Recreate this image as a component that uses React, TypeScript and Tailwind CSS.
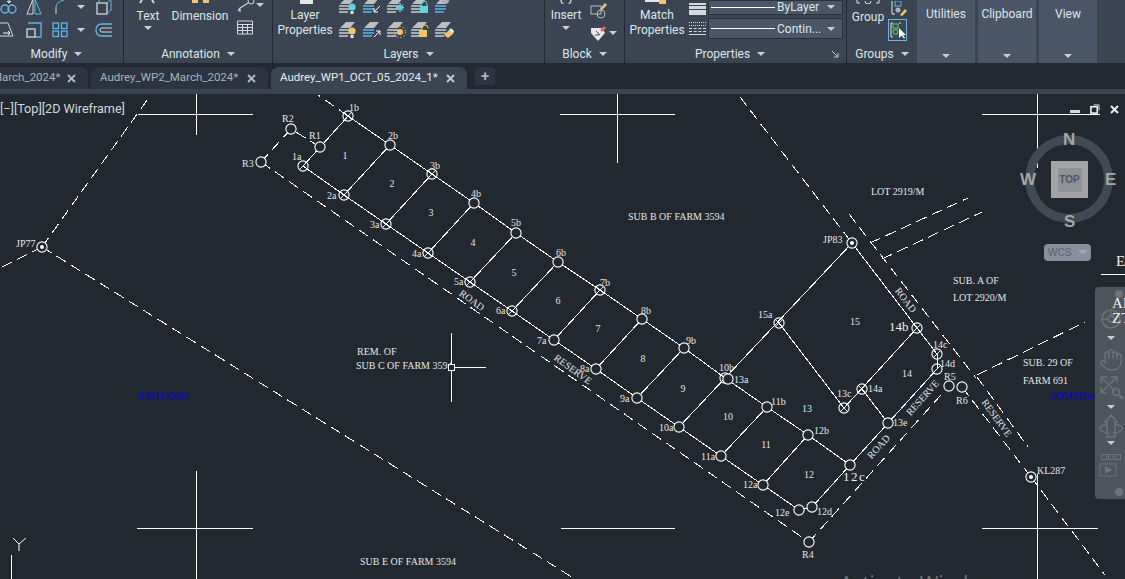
import { Hand } from "lucide-react";
import type { ReactNode } from "react";

const BLUE = "#5cb8ec";
const GREY = "#d4d9de";
const CYAN = "#63d3e0";
const AMBER = "#f5c469";
const BG = "#212830";

const Caret = ({ className = "" }: { className?: string }) => (
  <span className={`inline-block h-0 w-0 border-x-[4px] border-t-[4px] border-x-transparent border-t-[#c8ced4] ${className}`} />
);

const Ico = ({ w = 18, h = 18, children }: { w?: number; h?: number; children: ReactNode }) => (
  <svg width={w} height={h} viewBox={`0 0 ${w} ${h}`} fill="none" className="block shrink-0">
    {children}
  </svg>
);

const Panel = ({ title, className, titleClass = "", children, corner }: { title: string; className: string; titleClass?: string; children: ReactNode; corner?: boolean }) => (
  <div className={`relative flex h-[63px] shrink-0 flex-col border-r border-[#222933] ${className}`}>
    <div className="h-[46px] overflow-hidden">{children}</div>
    <div className={`flex h-[16px] items-center justify-center gap-[7px] text-[12px] leading-none text-[#dce6ea] ${titleClass}`}>
      {title}
      <Caret />
    </div>
    {corner && (
      <svg width="7" height="7" viewBox="0 0 7 7" className="absolute bottom-[5px] right-[7px]">
        <path d="M0 0L6 6M6 2V6H2" stroke="#c8ced4" fill="none" />
      </svg>
    )}
  </div>
);

const Stacked = ({ title }: { title: string }) => (
  <div className="flex h-[63px] w-[58px] shrink-0 flex-col items-center justify-between bg-[#4b5669] pb-[5px] pt-[7px] text-[12px] leading-[14px] text-[#dce6ea]">
    {title}
    <Caret />
  </div>
);

// layer sheet stack used by every icon of the Layers panel
const LayerIco = ({ tint, children }: { tint?: string; children?: ReactNode }) => (
  <Ico w={20} h={18}>
    <path d="M2 7L8 1H17L12 7Z" fill="#bcc0c5" />
    <path d="M1 9H12M1 12H12M1 15H10" stroke={tint ?? "#c9cdd2"} strokeWidth="1.5" />
    {children}
  </Ico>
);

const Bulb = ({ c }: { c: string }) => (
  <>
    <circle cx="14" cy="10" r="3.6" fill={c} />
    <rect x="12.5" y="14" width="3" height="3" fill="#e8e8e8" />
  </>
);

const LAYER_TOP = [
  <LayerIco key="a"><Bulb c={CYAN} /></LayerIco>,
  <LayerIco key="b" tint={BLUE}><path d="M18 9L12 15M12 11V15H16" stroke="#fff" fill="none" /></LayerIco>,
  <LayerIco key="c"><path d="M14 6V15M10 10.5H18M11 8L17 13M17 8L11 13" stroke={CYAN} strokeWidth="1.5" /></LayerIco>,
  <LayerIco key="d"><path d="M11 9V7a3 3 0 016 0v2" stroke={CYAN} fill="none" /><rect x="10" y="9" width="8" height="7" fill={CYAN} /></LayerIco>,
  <LayerIco key="e" tint={BLUE}><circle cx="11" cy="3" r="4" fill="#aeb3b8" /></LayerIco>,
];

const LAYER_BOTTOM = [
  <LayerIco key="a"><Bulb c={AMBER} /></LayerIco>,
  <LayerIco key="b" tint={BLUE}><path d="M12 16L18 10M14 10H18V14" stroke="#fff" fill="none" /></LayerIco>,
  <LayerIco key="c"><circle cx="14" cy="11" r="3" fill={AMBER} /><circle cx="14" cy="11" r="5.5" stroke={AMBER} strokeDasharray="1.5 2" /></LayerIco>,
  <LayerIco key="d"><path d="M12 9V7a3 3 0 016 0" stroke={AMBER} fill="none" /><rect x="9" y="9" width="8" height="7" fill={AMBER} /></LayerIco>,
  <LayerIco key="e"><path d="M10 14L15 9L19 13L14 17Z" fill={AMBER} /><path d="M15 9L17 7L20 10L19 13Z" fill="#eee" /></LayerIco>,
];

const Ribbon = () => (
  <div className="flex h-[63px] shrink-0 overflow-hidden bg-[#3b4453]">
    <Panel title="Modify" titleClass="pr-[10px]" className="w-[124px]">
      <div className="-mt-[2px] grid grid-cols-[20px_28px_24px_18px_28px] grid-rows-[18px_18px] items-center justify-items-center gap-y-[5px]">
        <Ico w={20}><circle cx="5" cy="11" r="4" stroke={BLUE} strokeWidth="1.4" /><circle cx="12" cy="11" r="4" stroke={BLUE} strokeWidth="1.4" /><path d="M9 0V5M7 3L9 5L11 3" stroke="#fff" /></Ico>
        <Ico><path d="M8 1L2 16H8Z" stroke={GREY} /><path d="M10 1L16 16H10Z" stroke={BLUE} /></Ico>
        <Ico><path d="M5 16V9" stroke={GREY} /><path d="M5 9Q5 4 13 2" stroke={BLUE} /></Ico>
        <Caret />
        <Ico><rect x="2" y="5" width="10" height="11" stroke={GREY} strokeWidth="1.3" /><path d="M2 5L6 1H16V12L12 16M12 5L16 1" stroke={BLUE} /></Ico>
        <Ico w={20}><path d="M0 2H8L13 15H0" stroke={GREY} /><path d="M3 12H10M8 10L10 12L8 14" stroke="#fff" /></Ico>
        <Ico><path d="M3 2H16V16H10" stroke={BLUE} strokeWidth="1.3" /><rect x="2" y="8" width="8" height="8" stroke={GREY} strokeWidth="1.3" /></Ico>
        <Ico><g stroke={BLUE} strokeWidth="1.3"><rect x="2" y="2" width="5.5" height="5.5" /><rect x="10.5" y="2" width="5.5" height="5.5" /><rect x="2" y="10" width="5.5" height="5.5" /><rect x="10.5" y="10" width="5.5" height="5.5" /></g></Ico>
        <Caret />
        <Ico><path d="M17 3H7Q1 3 1 9T7 15H17" stroke={BLUE} strokeWidth="1.3" /><path d="M17 7H7Q5 7 5 9T7 11H17" stroke={GREY} /></Ico>
      </div>
    </Panel>

    <Panel title="Annotation" className="w-[149px]">
      <div className="flex">
        <div className="flex w-[48px] flex-col items-center text-[12px] leading-[14px] text-[#dce6ea]">
          <svg width="24" height="4" viewBox="0 0 24 4" className="mb-[5px]"><path d="M4 3L6 0M18 3L16 0" stroke="#d4d9de" strokeWidth="2" /></svg>
          Text
          <Caret className="mt-[3px]" />
        </div>
        <div className="flex w-[56px] flex-col items-center whitespace-nowrap text-[12px] leading-[14px] text-[#dce6ea]">
          <svg width="26" height="4" viewBox="0 0 26 4" className="mb-[5px]"><rect x="5" y="0" width="6" height="3" fill={AMBER} /><rect x="16" y="0" width="6" height="3" fill={AMBER} /></svg>
          Dimension
        </div>
        <div className="-mt-[4px] grid grid-cols-[20px_12px] items-center gap-y-[5px] pl-[8px]">
          <Ico w={20}><circle cx="15" cy="5" r="3" stroke={GREY} /><path d="M12 7L4 12V16M4 12L2 15" stroke={GREY} strokeWidth="1.2" /></Ico>
          <Caret />
          <Ico><path d="M1.5 2H16.5V15H1.5ZM1.5 5.5H16.5M1.5 8.5H16.5M1.5 11.5H16.5M6.5 5.5V15M11.5 5.5V15" stroke={GREY} /></Ico>
        </div>
      </div>
    </Panel>

    <Panel title="Layers" className="w-[272px]">
      <div className="flex">
        <div className="flex w-[64px] flex-col items-center text-[12px] leading-[15px] text-[#dce6ea]">
          <svg width="14" height="4" viewBox="0 0 14 4" className="ml-[4px] mb-[4px]"><rect width="13" height="4" fill="#e6e6e6" /></svg>
          <span>Layer</span>
          <span>Properties</span>
        </div>
        <div className="-mt-[3px] ml-[1px] grid grid-cols-[repeat(5,24px)] grid-rows-[18px_18px] gap-y-[6px]">
          {LAYER_TOP}
          {LAYER_BOTTOM}
        </div>
      </div>
    </Panel>

    <Panel title="Block" className="w-[80px]">
      <div className="flex pl-[3px]">
        <div className="flex w-[36px] flex-col items-center text-[12px] leading-[14px] text-[#dce6ea]">
          <svg width="14" height="4" viewBox="0 0 14 4" className="mb-[4px]"><path d="M2 0A5 5 0 0012 0" stroke="#c8ced4" fill="none" strokeWidth="1.5" /></svg>
          Insert
          <Caret className="mt-[4px]" />
        </div>
        <div className="ml-[5px] grid grid-cols-[20px_12px] items-center gap-y-[5px] pt-[1px]">
          <Ico w={20}><rect x="2" y="5" width="10" height="8" stroke="#b9bec4" /><circle cx="12" cy="13" r="4" stroke="#b9bec4" /><path d="M11 8L16 2L18 4L13 9Z" fill={AMBER} /></Ico>
          <span />
          <Ico w={20}><path d="M2 4H13L16 9L9 17L2 9Z" fill="#e6e6e6" /><path d="M7 7L11 11M6 11H10" stroke="#3b4453" /><path d="M11 6L15 2L17 4L13 8Z" fill="#e86a5a" /></Ico>
          <Caret />
        </div>
      </div>
    </Panel>

    <Panel title="Properties" titleClass="pr-[11px]" corner className="w-[222px]">
      <div className="flex">
        <div className="flex w-[64px] flex-col items-center text-[12px] leading-[15px] text-[#dce6ea]">
          <svg width="24" height="4" viewBox="0 0 24 4" className="mb-[4px]"><rect x="0" y="0" width="16" height="2" fill="#e6e6e6" /><rect x="14" y="0" width="7" height="4" fill={AMBER} /></svg>
          <span>Match</span>
          <span>Properties</span>
        </div>
        <div className="flex flex-col gap-[3px]">
          <div className="flex items-start">
            <div className="mr-[2px] flex h-[15px] w-[17px] flex-col justify-end gap-[1px]">
              <div className="h-[2px] bg-[#d4d9de]" />
              <div className="h-[3px] bg-[#d4d9de]" />
              <div className="h-[5px] bg-[#d4d9de]" />
            </div>
            <Combo label="ByLayer" className="h-[15px] items-end pb-[1px]" />
          </div>
          <div className="flex items-center">
            <div className="mr-[2px] flex h-[21px] w-[17px] flex-col justify-center gap-[2px]">
              <div className="h-0 border-t border-dotted border-[#d4d9de]" />
              <div className="h-0 border-t border-dotted border-[#d4d9de]" />
              <div className="h-0 border-t border-dashed border-[#d4d9de]" />
              <div className="h-0 border-t border-dashed border-[#d4d9de]" />
              <div className="h-0 border-t border-[#d4d9de]" />
            </div>
            <Combo label="Contin..." className="h-[21px] items-center" />
          </div>
        </div>
      </div>
    </Panel>

    <Panel title="Groups" className="w-[70px] border-r-0">
      <div className="flex pl-[3px]">
        <div className="flex w-[36px] flex-col items-center text-[12px] leading-[14px] text-[#dce6ea]">
          <svg width="24" height="4" viewBox="0 0 24 4" className="mb-[6px]"><path d="M1 0V3H4M20 3H23V0M9 1A3 3 0 0015 1" stroke="#e6e6e6" fill="none" /></svg>
          Group
        </div>
        <div className="ml-[2px] flex flex-col items-center gap-[3px] pt-[1px]">
          <Ico w={18} h={15}><path d="M3 0V13H6" stroke="#e6e6e6" /><rect x="6" y="0" width="6" height="5" stroke={BLUE} /><circle cx="9" cy="9" r="2.5" fill="#aeb3b8" /><path d="M11 14L16 8L18 10L13 15Z" fill={AMBER} /></Ico>
          <div className="h-[22px] w-[19px] border border-[#6cb4e4]">
            <Ico w={17} h={20}><path d="M4 3H2V17H4M12 3H10" stroke="#e6e6e6" /><rect x="4" y="4" width="5" height="4" stroke="#54b86a" strokeWidth="1.3" /><circle cx="6.5" cy="12" r="2.3" stroke="#54b86a" strokeWidth="1.3" /><path d="M10 8V18L12.5 15.5L15 18.5L16 17.5L14 15H17Z" fill="#fff" /></Ico>
          </div>
        </div>
      </div>
    </Panel>

    <div className="flex shrink-0 gap-[3px]">
      <Stacked title="Utilities" />
      <Stacked title="Clipboard" />
      <Stacked title="View" />
    </div>
  </div>
);

const Combo = ({ label, className }: { label: string; className: string }) => (
  <div className={`flex w-[135px] justify-between border border-[#2a313d] bg-[#4b5669] pl-[2px] pr-[7px] text-[12px] leading-none text-[#dce6ea] ${className}`}>
    <span className="flex items-center gap-[2px]">
      <span className="h-0 w-[64px] border-t border-white" />
      {label}
    </span>
    <Caret className="self-center" />
  </div>
);

const Tab = ({ label, active, className }: { label: string; active?: boolean; className: string }) => (
  <div
    className={`flex h-[22px] shrink-0 items-center justify-between rounded-t-[8px] pr-[12px] text-[11.5px] ${active ? "bg-[#3b4453] text-[#e6edf0]" : "bg-[#2c3441] text-[#aab2bb]"} ${className}`}
  >
    <span>{label}</span>
    <svg width="9" height="9" viewBox="0 0 9 9"><path d="M1 1L8 8M8 1L1 8" stroke={active ? "#c4c9ce" : "#b4bac0"} strokeWidth="1.8" /></svg>
  </div>
);

const TabBar = () => (
  <div className="flex h-[31px] shrink-0 flex-col justify-end bg-[#222933]">
    <div className="flex gap-[3px] overflow-hidden">
      <Tab label="March_2024*" className="-ml-[8px] w-[96px] pl-0" />
      <Tab label="Audrey_WP2_March_2024*" className="w-[177px] pl-[9px]" />
      <Tab label="Audrey_WP1_OCT_05_2024_1*" active className="w-[196px] pl-[9px]" />
      <div className="ml-[5px] flex h-[18px] w-[20px] items-center justify-center rounded-t-[4px] bg-[#2c3441] text-[15px] font-bold leading-none text-[#aab2bb]">+</div>
    </div>
    <div className="h-[5px] bg-[#3b4453]" />
  </div>
);

type P = [number, number];
const B: P[] = [[348,116],[390,145],[432,174],[474,203],[516,233],[558,262],[600,290],[642,319],[684,348],[725,378],[767,407],[808,435],[850,465]];
const A: P[] = [[303,166],[344,195],[386,224],[428,253],[470,282],[512,311],[554,340],[596,369],[637,398],[679,427],[721,456],[763,485],[799,510]];

const pts = (l: P[]) => l.map((p) => p.join(",")).join(" ");

const SOLID: [number, number, number, number][] = [
  [812, 507, 937, 369], [799, 510, 812, 507], [679, 427, 852, 243], [852, 243, 937, 354], [937, 354, 937, 369],
  [917, 328, 844, 408], [779, 323, 844, 408], [862, 389, 888, 423],
  [350, 114, 303, 166],
  ...B.slice(1, 9).map((b, i) => [b[0], b[1], A[i + 1][0], A[i + 1][1]] as [number, number, number, number]),
  [767, 407, 721, 456], [808, 435, 763, 485],
];

const DASHED: [number, number, number, number][] = [
  [348, 116, 318, 95], [320, 147, 291, 129], [291, 129, 261, 162], [261, 162, 809, 542], [809, 542, 949, 386],
  [740, 97, 852, 243], [849, 214, 976, 378], [977, 377, 1028, 447], [962, 387, 1031, 477], [1031, 477, 1105, 575],
  [870, 243, 968, 198], [882, 259, 982, 212], [977, 375, 1085, 322],
  [42, 247, 150, 96], [42, 247, 0, 268], [42, 247, 575, 579],
];

const GRID: [number, number, number, number][] = [
  [138, 114, 253, 114], [196.5, 94, 196.5, 135], [560, 114, 675, 114], [617.5, 94, 617.5, 163],
  [982, 114, 1100, 114], [1037.5, 94, 1037.5, 168],
  [137, 528, 253, 528], [196.5, 471, 196.5, 579], [561, 528, 675, 528],
  [982, 528, 1098, 528], [1037.5, 474, 1037.5, 579],
];

type Mark = [number, number, "o" | "x" | "/" | "d"];
const MARKS: Mark[] = [
  [348,116,"x"],[390,145,"o"],[432,174,"x"],[474,203,"o"],[516,233,"o"],[558,262,"o"],[600,290,"x"],[642,319,"o"],[684,348,"o"],[725,378,"x"],[728,379,"o"],[767,407,"o"],[808,435,"o"],[850,465,"o"],
  [303,166,"/"],[344,195,"x"],[386,224,"x"],[428,253,"x"],[470,282,"x"],[512,311,"/"],[554,340,"o"],[596,369,"o"],[637,398,"o"],[679,427,"o"],[721,456,"o"],[763,485,"o"],[799,510,"o"],[812,507,"o"],
  [320,147,"o"],[291,129,"o"],[261,162,"o"],[809,542,"o"],[852,243,"d"],[779,323,"x"],[917,328,"x"],[937,354,"/"],[937,369,"/"],[844,408,"x"],[862,389,"x"],[888,423,"o"],[949,386,"o"],[962,387,"o"],[1031,477,"d"],[42,247,"d"],
];

const LABELS: [string, number, number][] = [
  ["1b",349,111],["R2",282,122],["R1",309,139],["1a",292,160],["R3",242,167],["2b",388,139],["3b",430,169],["4b",471,197],["5b",511,226],["6b",556,256],["7b",600,286],["8b",641,314],["9b",686,344],["10b",719,371],["13a",734,383],["11b",771,405],["12b",814,434],
  ["2a",327,199],["3a",370,228],["4a",412,257],["5a",454,285],["6a",496,314],["7a",537,344],["8a",580,372],["9a",620,402],["10a",659,431],["11a",701,460],["12a",743,488],["12e",775,516],["12d",817,515],["R4",802,558],["R5",944,380],["R6",956,404],
  ["14a",868,392],["13c",837,397],["13e",893,426],["14c",933,348],["14d",940,367],["15a",758,318],["JP83",823,243],["JP77",16,247],["KL287",1037,474],
];

const LOTS: [string, number, number][] = [
  ["1",345,159],["2",392,187],["3",431,216],["4",473,246],["5",514,276],["6",558,304],["7",598,332],["8",643,362],["9",683,392],["10",728,420],["11",766,448],["12",809,478],["13",807,412],["14",907,377],["15",855,325],
];

const NOTES: [string, number, number][] = [
  ["SUB B OF FARM 3594",628,220],["LOT 2919/M",871,195],["SUB. A OF",953,284],["LOT 2920/M",953,301],["SUB. 29 OF",1023,366],["FARM 691",1023,384],["REM. OF",357,355],["SUB C OF FARM 3594",356,369],["SUB E OF FARM 3594",360,565],
];

const ROTATED: [string, number, number, number][] = [
  ["ROAD",470,303,36],["RESERVE",571,372,36],["ROAD",903,302,53],["RESERVE",925,400,-48],["ROAD",881,449,-48],["RESERVE",994,420,54],
];

const Drawing = () => (
  <svg viewBox="0 94 1125 485" className="block h-full w-full" fontFamily="'Liberation Serif', serif">
    <g stroke="#fff" fill="none" shapeRendering="crispEdges">
      {GRID.map(([x1, y1, x2, y2]) => <line key={`${x1}-${y1}-${x2}`} x1={x1} y1={y1} x2={x2} y2={y2} strokeWidth="1" />)}
      {DASHED.map(([x1, y1, x2, y2]) => <line key={`${x1}-${y1}-${x2}`} x1={x1} y1={y1} x2={x2} y2={y2} strokeDasharray="11 6" />)}
      <polyline points={pts(B)} />
      <polyline points={pts(A)} />
      {SOLID.map(([x1, y1, x2, y2]) => <line key={`${x1}-${y1}-${x2}`} x1={x1} y1={y1} x2={x2} y2={y2} />)}
    </g>
    <g stroke="#fff" strokeWidth="1.1">
      {MARKS.map(([x, y, t]) => (
        <g key={`${x}-${y}`}>
          <circle cx={x} cy={y} r="5.1" fill={t === "o" || t === "d" ? BG : "none"} />
          {t === "x" && <path d={`M${x - 3.4} ${y - 3.4}L${x + 3.4} ${y + 3.4}M${x + 3.4} ${y - 3.4}L${x - 3.4} ${y + 3.4}`} strokeWidth="0.9" />}
          {t === "/" && <path d={`M${x + 3.4} ${y - 3.4}L${x - 3.4} ${y + 3.4}`} strokeWidth="0.9" />}
          {t === "d" && <circle cx={x} cy={y} r="2" fill="#fff" stroke="none" />}
        </g>
      ))}
    </g>
    <g fill="#e4e6e8" fontSize="10">
      {LABELS.map(([t, x, y]) => <text key={t} x={x} y={y}>{t}</text>)}
      {LOTS.map(([t, x, y]) => <text key={`lot${t}`} x={x} y={y} textAnchor="middle">{t}</text>)}
      {NOTES.map(([t, x, y]) => <text key={t} x={x} y={y}>{t}</text>)}
      {ROTATED.map(([t, x, y, r]) => (
        <text key={`${t}${x}`} x={x} y={y} textAnchor="middle" transform={`rotate(${r} ${x} ${y})`}>{t}</text>
      ))}
      <text x="889" y="331" fontSize="13" fill="#eee">14b</text>
      <text x="843" y="481" fontSize="13" fill="#eee" letterSpacing="1.5">12c</text>
      <text x="139" y="399" fill="#0000e8">8304325mN</text>
      <text x="1052" y="399" fill="#0000e8">8304325mN</text>
      <text x="840" y="590" fontSize="20" fill="#6c7178" fontFamily="'Noto Sans', sans-serif">Activate Windows</text>
    </g>
    {/* pick cursor */}
    <path d="M451.5 333V402M451 367.5H486" stroke="#fff" shapeRendering="crispEdges" />
    <rect x="448.5" y="364.5" width="6" height="6" fill={BG} stroke="#fff" shapeRendering="crispEdges" />
    {/* UCS stub */}
    <path d="M13 538L19 544L26 538M19 544V551M11.5 555V579" stroke="#fff" fill="none" />
  </svg>
);

const ViewCube = () => (
  <div className="absolute left-[1025px] top-[41px] h-[88px] w-[88px] text-center font-['Liberation_Sans',sans-serif] text-[17px] font-bold leading-none text-[#a2a6aa]">
    <div className="absolute inset-0 rounded-full border-[9px] border-[#414a54]" />
    <div className="absolute left-[26px] top-[26px] flex h-[37px] w-[37px] items-center justify-center bg-[#a4a4a4]">
      <div className="flex h-[24px] w-[24px] items-center justify-center bg-[#8e9398] text-[10px] text-[#4c5560]">TOP</div>
    </div>
    <span className="absolute left-[38px] top-[-4px]">N</span>
    <span className="absolute left-[39px] top-[78px]">S</span>
    <span className="absolute left-[-5px] top-[36px]">W</span>
    <span className="absolute left-[80px] top-[36px]">E</span>
  </div>
);

const NavBar = () => (
  <div className="absolute left-[1095px] top-[193px] flex h-[212px] w-[32px] flex-col items-center rounded-l-[4px] bg-[#4f555d] pt-[21px] text-[#6d737a]">
    <div className="absolute right-[4px] top-[3px] h-[8px] w-[8px] rounded-full bg-[#6d737a]" />
    <svg width="28" height="22" viewBox="0 0 28 22" fill="none" stroke="currentColor" strokeWidth="1.5"><circle cx="14" cy="11" r="9" /><circle cx="14" cy="11" r="3" /><path d="M5 11H11M14 2V8" /></svg>
    <Caret className="mt-[6px] border-t-[#6d737a]" />
    <Hand size={24} strokeWidth={1.3} className="mt-[8px]" />
    <svg width="26" height="26" viewBox="0 0 26 26" fill="none" stroke="currentColor" strokeWidth="1.4" className="mt-[2px]"><path d="M3 3L17 17M19 3L3 19M3 3H9M3 3V9M19 3H13M19 3V9M3 19V13M3 19H9" /><circle cx="18" cy="18" r="3.5" /><path d="M21 21L25 25" strokeWidth="2.5" /></svg>
    <Caret className="mt-[5px] border-t-[#6d737a]" />
    <svg width="26" height="24" viewBox="0 0 26 24" fill="none" stroke="currentColor" strokeWidth="1.4" className="mt-[5px]"><path d="M9 8H7L13 1L19 8H17V23H9ZM9 10Q1 12 2 15Q4 19 11 19M17 10Q25 12 24 15Q22 19 15 19" /></svg>
    <Caret className="mt-[3px] border-t-[#6d737a]" />
    <div className="mt-[9px] flex gap-[1px]">
      <div className="h-[6px] w-[6px] border border-[#6d737a]" />
      <div className="h-[6px] w-[6px] border border-[#6d737a]" />
      <div className="h-[6px] w-[6px] border border-[#6d737a]" />
    </div>
    <svg width="18" height="14" viewBox="0 0 18 14" className="mr-[7px] mt-[3px]"><rect x="1" y="1" width="16" height="12" fill="none" stroke="currentColor" /><path d="M6 3L13 7L6 11Z" fill="currentColor" /></svg>
    <div className="absolute bottom-[3px] right-[4px] h-[8px] w-[8px] rounded-full bg-[#6d737a]" />
    <span className="absolute left-[17px] top-[9px] font-['Liberation_Serif',serif] text-[15px] leading-[15px] text-[#eee]">AI<br />ZT</span>
  </div>
);

export default function App() {
  return (
    <div className="flex h-[579px] w-[1125px] flex-col overflow-hidden bg-[#212830] font-['Roboto',sans-serif]">
      <Ribbon />
      <TabBar />
      <div className="relative min-h-0 flex-1 overflow-hidden">
        <Drawing />
        <span className="absolute left-0 top-[7px] text-[12.6px] leading-[15px] text-[#d4d8dc]">[−][Top][2D Wireframe]</span>
        <div className="absolute right-[6px] top-[10px] flex items-center gap-[10px]">
          <div className="mt-[5px] h-[3px] w-[10px] bg-[#d8d8d8]" />
          <svg width="10" height="10" viewBox="0 0 11 11" fill="none" stroke="#eee"><rect x="1" y="3" width="7" height="7" strokeWidth="1.8" /><path d="M4 1H10V7" /></svg>
          <svg width="9" height="9" viewBox="0 0 9 9"><path d="M1 1L8 8M8 1L1 8" stroke="#eee" strokeWidth="2" /></svg>
        </div>
        <ViewCube />
        <div className="absolute left-[1044px] top-[150px] flex h-[17px] w-[47px] items-center justify-between rounded-[4px] bg-[#8a8e9c] pl-[4px] pr-[3px] font-['Liberation_Sans',sans-serif] text-[10px] text-[#5d6270]">
          WCS
          <span className="inline-block h-0 w-0 border-x-[5px] border-t-[5px] border-x-transparent border-t-[#a4a8b4]" />
        </div>
        <span className="absolute left-[1116px] top-[160px] font-['Liberation_Serif',serif] text-[15px] leading-[15px] text-[#eee]">E</span>
        <div className="absolute left-[1101px] top-[180px] h-px w-[24px] bg-white" />
        <NavBar />
      </div>
    </div>
  );
}
